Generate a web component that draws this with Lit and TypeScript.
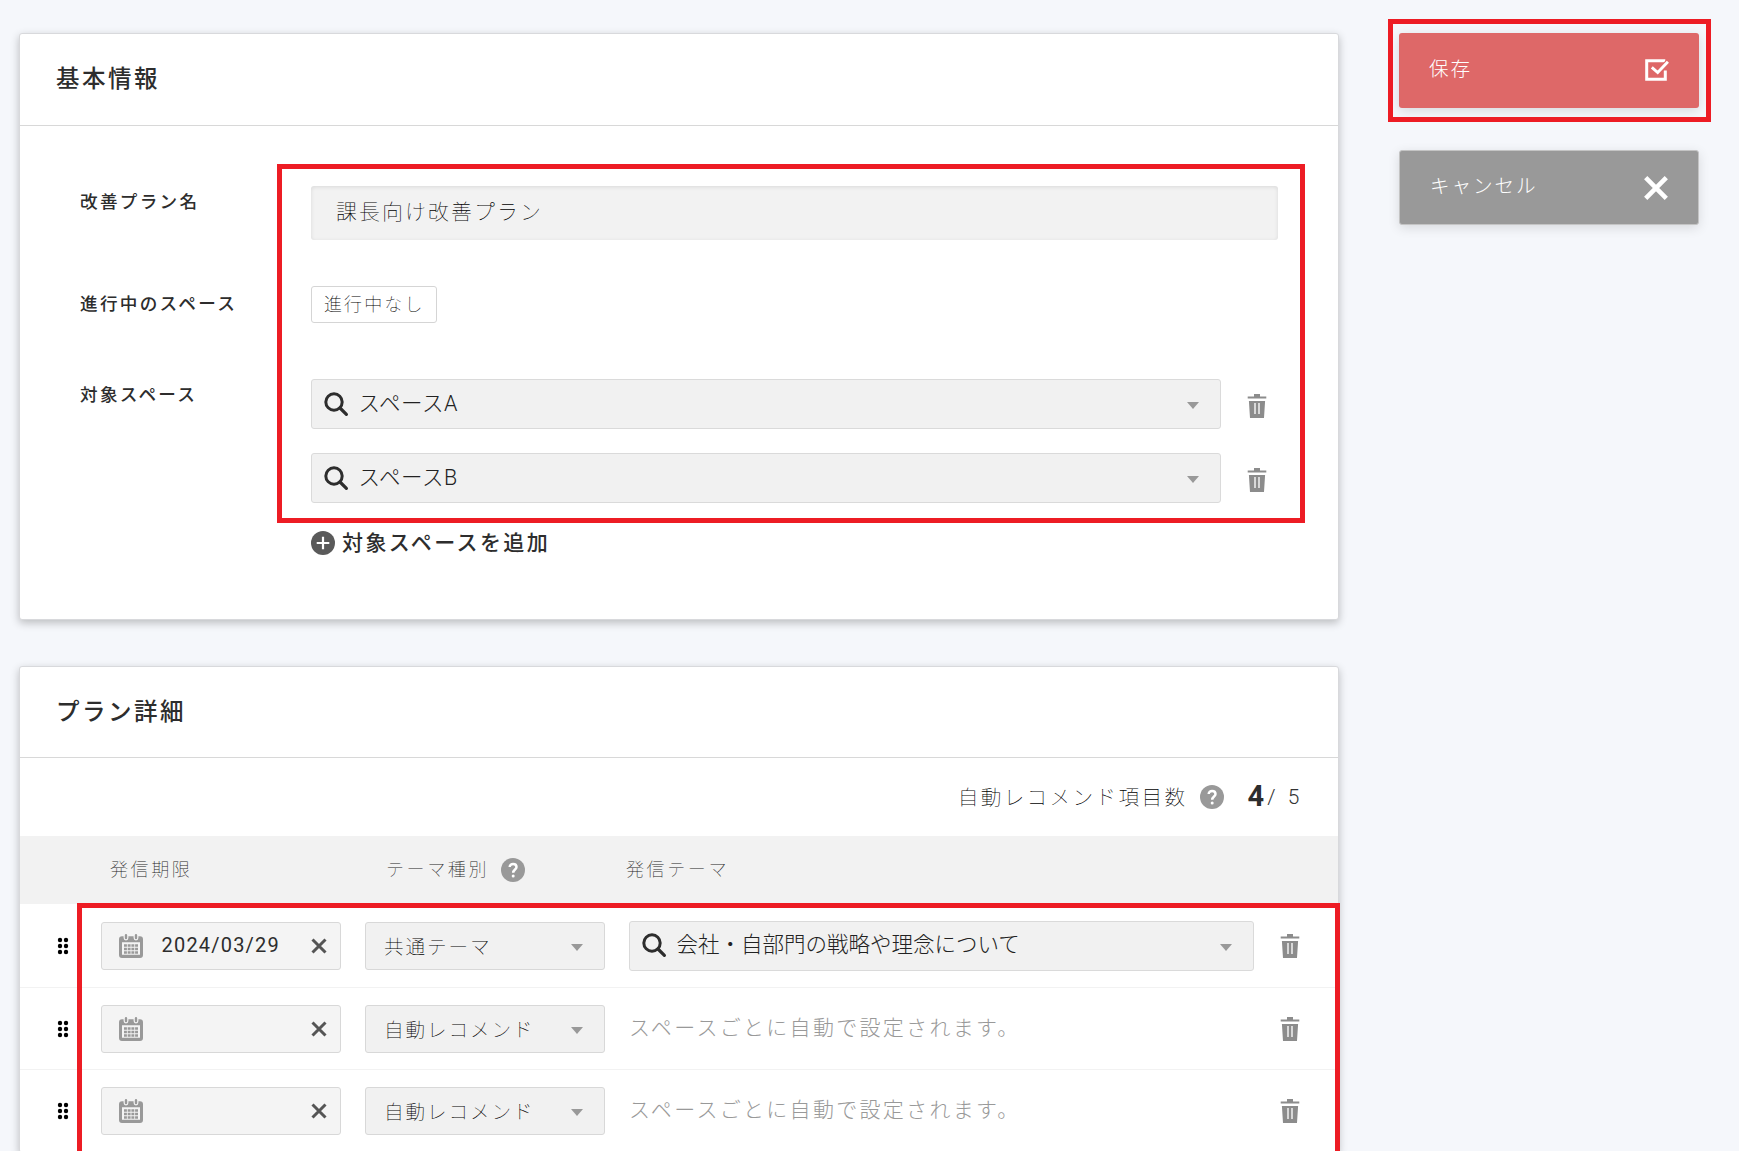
import { LitElement, html, css, svg } from "lit";
import { customElement, property } from "lit/decorators.js";

type IconName = "search" | "trash" | "calendar" | "close" | "check" | "cancel" | "plus" | "help" | "grip" | "caret";

const glyphs = {
  search: svg`<circle cx="10" cy="10" r="8.2" fill="none" stroke="#2d2d2d" stroke-width="3"/><path d="M16 16L22.4 22.4" stroke="#2d2d2d" stroke-width="3.2" stroke-linecap="round"/>`,
  trash: svg`<path fill="#8c8c8c" fill-rule="evenodd" d="M9 0h6v2.600H21.300v2H2.700v-2H9zM3.900 6.900H20.100L19 24H5z"/><path fill="#d8d8d8" d="M9 8.900h2v11H9zM13 8.900h2v11h-2z"/>`,
  calendar: svg`<path fill="#999" fill-rule="evenodd" d="M3 2.2H21a3 3 0 0 1 3 3V21a3 3 0 0 1-3 3H3a3 3 0 0 1-3-3V5.200a3 3 0 0 1 3-3zM3 8.300V20.700H21V8.300z"/><path d="M7 1.200V4M17 1.200V4" stroke="#f4f4f4" stroke-width="4.800" stroke-linecap="round"/><path d="M7 1.200V4M17 1.200V4" stroke="#999" stroke-width="2.400" stroke-linecap="round"/><path d="M5 11.400H19M5 15H19M5 18.500H19" stroke="#999" stroke-width="2.500" stroke-dasharray="2.900 .8"/>`,
  close: svg`<path d="M5.500 5.500L18.500 18.500M18.500 5.500L5.500 18.500" stroke="#555" stroke-width="3"/>`,
  check: svg`<path d="M20.300 1.700H1.700V20.300H20.300V11.500" fill="none" stroke="#fff" stroke-width="3"/><path d="M6.800 8.700L12.500 14L23.200 2.500" fill="none" stroke="#de6868" stroke-width="5.400"/><path d="M6.800 8.300L12.700 13.600L22.900 2.800" fill="none" stroke="#fff" stroke-width="2.900"/>`,
  cancel: svg`<path d="M1.700 1.700L22.300 22.300M22.300 1.700L1.700 22.300" stroke="#fff" stroke-width="4.600"/>`,
  plus: svg`<circle cx="12" cy="12" r="12" fill="#5a5a5a"/><path d="M12 5.700V18.300M5.700 12H18.300" stroke="#fff" stroke-width="2.200"/>`,
  help: svg`<circle cx="12" cy="12" r="12" fill="#999"/><path d="M8.700 8.900C8.700 4.900 15.500 4.900 15.500 9C15.500 11.500 12.200 11.500 12.200 14.800" fill="none" stroke="#fff" stroke-width="2.500"/><circle cx="12.200" cy="18" r="1.500" fill="#fff"/>`,
  grip: svg`<g fill="#000"><circle cx="9" cy="6" r="2.200"/><circle cx="15" cy="6" r="2.200"/><circle cx="9" cy="12" r="2.200"/><circle cx="15" cy="12" r="2.200"/><circle cx="9" cy="18" r="2.200"/><circle cx="15" cy="18" r="2.200"/></g>`,
  caret: svg`<path d="M6 9H18L12 16z" fill="#999"/>`,
};

@customElement("ui-icon")
class UiIcon extends LitElement {
  @property() name: IconName = "search";
  static styles = css`
    :host { display: block; flex: none; width: 24px; height: 24px; }
    .glyph { display: block; overflow: visible; }
  `;
  render() {
    return html`<svg class="glyph" width="24" height="24" viewBox="0 0 24 24">${glyphs[this.name]}</svg>`;
  }
}

@customElement("search-select")
class SearchSelect extends LitElement {
  @property() value = "";
  static styles = css`
    :host {
      display: flex; align-items: center; box-sizing: border-box; height: 50px;
      padding: 0 15px 0 12px; border: 1px solid #dadada; border-radius: 3px; background: #f1f1f1;
      font-family: Roboto, "Noto Sans CJK JP", sans-serif;
      font-size: 21.500px; font-weight: 300; color: #222;
    }
    .icon { margin-top: -1px; }
    .value { flex: 1; padding-left: 10.500px; line-height: 30px; margin-top: -1px; white-space: nowrap; }
    .caret { margin-top: 2px; }
  `;
  render() {
    return html`<ui-icon class="icon" name="search"></ui-icon><span class="value">${this.value}</span><ui-icon class="caret" name="caret"></ui-icon>`;
  }
}

interface PlanRow { date: string; kind: string; theme: string; }

const targetSpaces = ["スペースA", "スペースB"];
const planRows: PlanRow[] = [
  { date: "2024/03/29", kind: "共通テーマ", theme: "会社・自部門の戦略や理念について" },
  { date: "", kind: "自動レコメンド", theme: "" },
  { date: "", kind: "自動レコメンド", theme: "" },
];

@customElement("app-root")
class AppRoot extends LitElement {
  static styles = css`
    :host {
      display: block; position: relative; height: 1151px; overflow: hidden; background: #f5f7fb;
      font-family: "Noto Sans CJK JP", sans-serif; font-weight: 100; color: #000;
    }
    .page { display: flex; align-items: flex-start; gap: 60px; padding: 33px 40px 0 19px; }
    .main { display: flex; flex-direction: column; gap: 46px; width: 1320px; }
    .card {
      box-sizing: border-box; border: 1px solid #d8d9dc; border-radius: 3px; background: #fff;
      box-shadow: 0 3px 8px rgba(0, 0, 0, .24);
    }
    .basic { height: 587px; }
    .title {
      box-sizing: border-box; height: 91px; margin: 0; padding: 23px 36px 0; border-bottom: 1px solid #d8d8d8;
      font-size: 23.500px; line-height: 40px; font-weight: 500; letter-spacing: 2.500px; color: #2d2d2d;
    }
    .basic .title { height: 92px; }
    .form { display: grid; grid-template-columns: 231px 967px; padding: 60px 0 0 60px; }
    .label { font-size: 17.600px; font-weight: 500; letter-spacing: 2.300px; line-height: 30px; box-sizing: border-box; color: #2d2d2d; }
    .name-row { height: 100px; }
    .state-row { height: 93px; padding-top: 2px; }
    .name {
      box-sizing: border-box; width: 967px; height: 54px; padding: 0 25px; border-radius: 3px; background: #f2f2f2;
      box-shadow: inset 0 1px 4px rgba(0, 0, 0, .1); font-size: 20.900px; letter-spacing: 2.100px; line-height: 48px;
    }
    .tag {
      display: inline-block; box-sizing: border-box; height: 37px; width: 126px; padding-left: 12px;
      border: 1px solid #d5d5d5; border-radius: 3px; font-size: 18px; letter-spacing: 2.100px; line-height: 33px;
    }
    .spaces { display: flex; flex-direction: column; gap: 24px; }
    .space { display: flex; align-items: center; gap: 24px; }
    .space-select { width: 910px; letter-spacing: .5px; }
    .space-trash { margin-top: 4px; }
    .add {
      display: flex; align-items: center; gap: 7px; margin-top: 28px; height: 24px;
      font-size: 21px; font-weight: 500; letter-spacing: 2.400px; line-height: 24px; color: #2d2d2d;
    }
    .add-text { margin-top: -4px; }
    .counter { display: flex; align-items: center; height: 78px; padding-right: 36px; justify-content: flex-end; }
    .counter-label { font-size: 20.600px; letter-spacing: 2.400px; margin: -3px 12px 0 0; }
    .count { font-size: 29px; font-weight: 700; line-height: 40px; margin: -3px 0 0 24px; font-family: Roboto, sans-serif; color: #2d2d2d; }
    .total { font: 300 20.900px/24px Roboto, "Noto Sans CJK JP", sans-serif; letter-spacing: 2.600px; word-spacing: 2px; margin-left: 3px; color: #333; }
    .columns {
      display: grid; grid-template-columns: 276px 240px 1fr; align-items: center; height: 68px; padding-left: 90px;
      background: #f2f2f2; font-size: 18px; letter-spacing: 2.600px; color: #1c1c1c;
    }
    .column { display: flex; align-items: center; gap: 12px; }
    .column-text { margin-top: -4px; }
    .row {
      display: grid; grid-template-columns: 24px 240px 240px 625px 24px; align-items: center; height: 81px;
      padding-left: 31px; border-bottom: 1px solid #f2f2f2;
    }
    .row.tall { height: 83px; }
    .date, .kind {
      display: flex; align-items: center; box-sizing: border-box; height: 48px; border: 1px solid #d8d8d8;
      border-radius: 3px; background: #f4f4f4;
    }
    .date { margin-left: 26px; width: 240px; padding: 0 9.500px 0 17px; }
    .date-text { flex: 1; padding-left: 18.500px; font: 400 20px/24px Roboto, sans-serif; letter-spacing: 1.200px; margin-top: -1px; color: #2d2d2d; }
    .kind { margin-left: 50px; width: 240px; padding: 0 15px 0 18px; background: #f1f1f1; }
    .kind-text { flex: 1; font-size: 19.600px; letter-spacing: 1.900px; margin-top: -1px; }
    .kind-caret { margin-top: 2px; }
    .theme { margin-left: 74px; width: 625px; box-sizing: border-box; }
    .auto { margin-left: 74px; font-size: 21px; font-weight: 300; letter-spacing: 2.300px; color: #999; margin-top: -5px; white-space: nowrap; }
    .row-trash { margin-left: 98px; }
    .side { display: flex; flex-direction: column; gap: 42px; width: 300px; }
    .button {
      display: flex; align-items: center; justify-content: space-between; box-sizing: border-box; height: 75px;
      padding: 0 30px; border: 0; border-radius: 3px; background: #de6868; color: #fff;
      box-shadow: 0 3px 12px rgba(0, 0, 0, .12); font: inherit; font-weight: 300; font-size: 19.600px; letter-spacing: 1.900px;
    }
    .button-text { margin-top: -7px; }
    .button.cancel { background: #999; border: 1px solid #c4c4c4; }
    .mark { position: absolute; border: 5px solid #ed1c24; box-sizing: border-box; }
    .mark-form { left: 277px; top: 164px; width: 1028px; height: 359px; }
    .mark-save { left: 1388px; top: 19px; width: 323px; height: 103px; }
    .mark-plan { left: 77px; top: 903px; width: 1263px; height: 300px; }
  `;

  private renderRow(row: PlanRow) {
    return html`<div class="row ${row.theme ? "tall" : ""}">
      <ui-icon name="grip"></ui-icon>
      <div class="date"><ui-icon name="calendar"></ui-icon><span class="date-text">${row.date}</span><ui-icon name="close"></ui-icon></div>
      <div class="kind"><span class="kind-text">${row.kind}</span><ui-icon class="kind-caret" name="caret"></ui-icon></div>
      ${row.theme
        ? html`<search-select class="theme" .value=${row.theme}></search-select>`
        : html`<span class="auto">スペースごとに自動で設定されます。</span>`}
      <ui-icon class="row-trash" name="trash"></ui-icon>
    </div>`;
  }

  render() {
    return html`
      <div class="page">
        <main class="main">
          <section class="card basic">
            <h2 class="title">基本情報</h2>
            <div class="form">
              <div class="label name-row">改善プラン名</div>
              <div><div class="name">課長向け改善プラン</div></div>
              <div class="label state-row">進行中のスペース</div>
              <div><span class="tag">進行中なし</span></div>
              <div class="label">対象スペース</div>
              <div>
                <div class="spaces">
                  ${targetSpaces.map((s) => html`<div class="space">
                    <search-select class="space-select" .value=${s}></search-select>
                    <ui-icon class="space-trash" name="trash"></ui-icon>
                  </div>`)}
                </div>
                <div class="add"><ui-icon name="plus"></ui-icon><span class="add-text">対象スペースを追加</span></div>
              </div>
            </div>
          </section>
          <section class="card">
            <h2 class="title">プラン詳細</h2>
            <div class="counter">
              <span class="counter-label">自動レコメンド項目数</span><ui-icon name="help"></ui-icon>
              <span class="count">4</span><span class="total">/ 5</span>
            </div>
            <div class="columns">
              <span class="column"><span class="column-text">発信期限</span></span>
              <span class="column"><span class="column-text">テーマ種別</span><ui-icon name="help"></ui-icon></span>
              <span class="column"><span class="column-text">発信テーマ</span></span>
            </div>
            ${planRows.map((r) => this.renderRow(r))}
          </section>
        </main>
        <aside class="side">
          <button class="button"><span class="button-text">保存</span><ui-icon name="check"></ui-icon></button>
          <button class="button cancel"><span class="button-text">キャンセル</span><ui-icon name="cancel"></ui-icon></button>
        </aside>
      </div>
      <div class="mark mark-form"></div>
      <div class="mark mark-save"></div>
      <div class="mark mark-plan"></div>
    `;
  }
}
